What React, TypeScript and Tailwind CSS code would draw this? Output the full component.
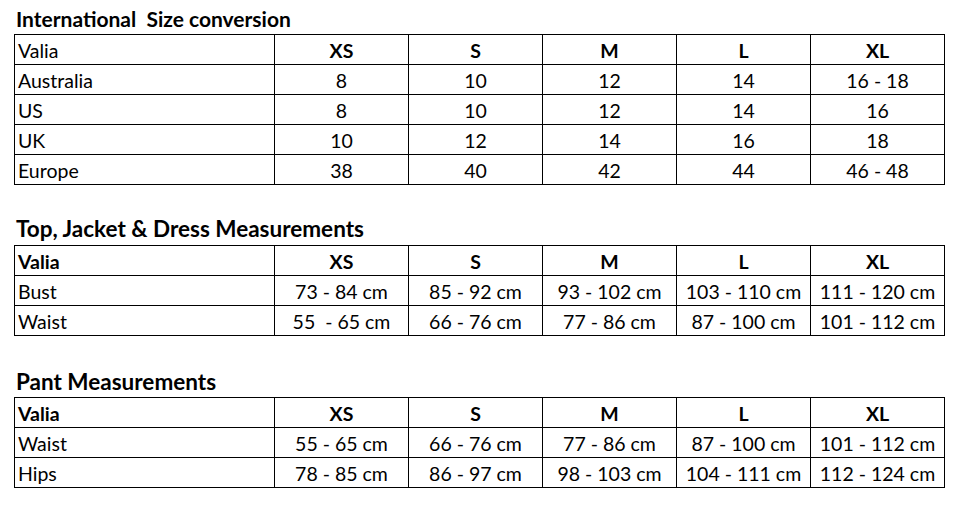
const sizes = ["XS", "S", "M", "L", "XL"];

const conversion = [
  { label: "Australia", values: ["8", "10", "12", "14", "16 - 18"] },
  { label: "US", values: ["8", "10", "12", "14", "16"] },
  { label: "UK", values: ["10", "12", "14", "16", "18"] },
  { label: "Europe", values: ["38", "40", "42", "44", "46 - 48"] },
];

const tops = [
  { label: "Bust", values: ["73 - 84 cm", "85 - 92 cm", "93 - 102 cm", "103 - 110 cm", "111 - 120 cm"] },
  { label: "Waist", values: ["55  - 65 cm", "66 - 76 cm", "77 - 86 cm", "87 - 100 cm", "101 - 112 cm"] },
];

const pants = [
  { label: "Waist", values: ["55 - 65 cm", "66 - 76 cm", "77 - 86 cm", "87 - 100 cm", "101 - 112 cm"] },
  { label: "Hips", values: ["78 - 85 cm", "86 - 97 cm", "98 - 103 cm", "104 - 111 cm", "112 - 124 cm"] },
];

type Row = { label: string; values: string[] };

function SizeTable({ rows, boldLabel }: { rows: Row[]; boldLabel?: boolean }) {
  return (
    <table className="table-fixed border-collapse w-[929px]">
      <colgroup>
        <col className="w-[260px]" />
        {sizes.map((s) => (
          <col key={s} className="w-[134px]" />
        ))}
      </colgroup>
      <tbody>
        <tr className="h-[30px]">
          <td className={`border border-black px-[3px] pt-[2px] text-left whitespace-pre ${boldLabel ? "font-bold" : ""}`}>Valia</td>
          {sizes.map((s) => (
            <td key={s} className="border border-black pt-[2px] text-center font-bold">
              {s}
            </td>
          ))}
        </tr>
        {rows.map((r) => (
          <tr key={r.label} className="h-[30px]">
            <td className="border border-black px-[3px] pt-[2px] text-left">{r.label}</td>
            {r.values.map((v, i) => (
              <td key={i} className="border border-black pt-[2px] text-center whitespace-pre">
                {v}
              </td>
            ))}
          </tr>
        ))}
      </tbody>
    </table>
  );
}

export default function App() {
  return (
    <div className="w-[959px] h-[505px] bg-white text-black font-['Lato',sans-serif] text-[19.5px] leading-none pl-[14px] overflow-hidden">
      <div className="h-[34px] flex items-end pb-[5px] pl-[2px] font-bold text-[21px] whitespace-pre">
        International  Size conversion
      </div>
      <SizeTable rows={conversion} />

      <div className="h-[60px] flex items-end pb-[5px] pl-[2px] font-bold text-[22.5px]">
        Top, Jacket &amp; Dress Measurements
      </div>
      <SizeTable rows={tops} boldLabel />

      <div className="h-[61px] flex items-end pb-[4px] pl-[2px] font-bold text-[22.5px]">
        Pant Measurements
      </div>
      <SizeTable rows={pants} boldLabel />
    </div>
  );
}
